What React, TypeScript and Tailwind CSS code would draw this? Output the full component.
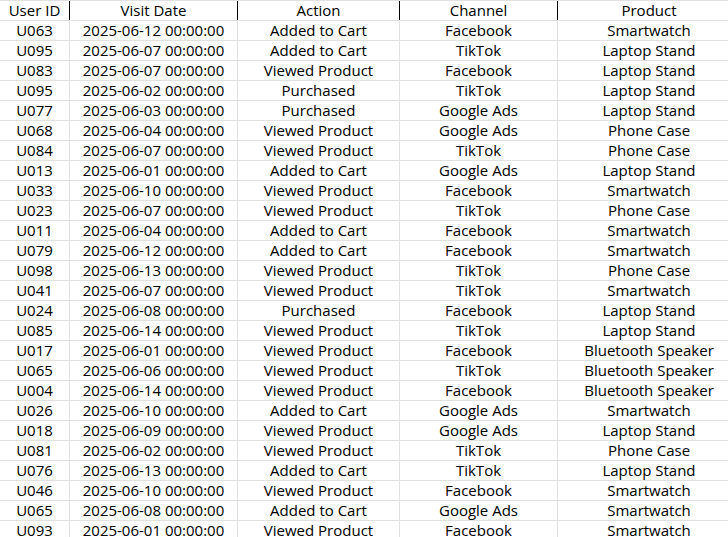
const COLS = [
  { key: "id", label: "User ID", w: "w-[70px]" },
  { key: "date", label: "Visit Date", w: "w-[168px]" },
  { key: "action", label: "Action", w: "w-[162px]" },
  { key: "channel", label: "Channel", w: "w-[158px]" },
  { key: "product", label: "Product", w: "w-[182px]" },
];

const ROWS: string[][] = [
  ["U063", "2025-06-12 00:00:00", "Added to Cart", "Facebook", "Smartwatch"],
  ["U095", "2025-06-07 00:00:00", "Added to Cart", "TikTok", "Laptop Stand"],
  ["U083", "2025-06-07 00:00:00", "Viewed Product", "Facebook", "Laptop Stand"],
  ["U095", "2025-06-02 00:00:00", "Purchased", "TikTok", "Laptop Stand"],
  ["U077", "2025-06-03 00:00:00", "Purchased", "Google Ads", "Laptop Stand"],
  ["U068", "2025-06-04 00:00:00", "Viewed Product", "Google Ads", "Phone Case"],
  ["U084", "2025-06-07 00:00:00", "Viewed Product", "TikTok", "Phone Case"],
  ["U013", "2025-06-01 00:00:00", "Added to Cart", "Google Ads", "Laptop Stand"],
  ["U033", "2025-06-10 00:00:00", "Viewed Product", "Facebook", "Smartwatch"],
  ["U023", "2025-06-07 00:00:00", "Viewed Product", "TikTok", "Phone Case"],
  ["U011", "2025-06-04 00:00:00", "Added to Cart", "Facebook", "Smartwatch"],
  ["U079", "2025-06-12 00:00:00", "Added to Cart", "Facebook", "Smartwatch"],
  ["U098", "2025-06-13 00:00:00", "Viewed Product", "TikTok", "Phone Case"],
  ["U041", "2025-06-07 00:00:00", "Viewed Product", "TikTok", "Smartwatch"],
  ["U024", "2025-06-08 00:00:00", "Purchased", "Facebook", "Laptop Stand"],
  ["U085", "2025-06-14 00:00:00", "Viewed Product", "TikTok", "Laptop Stand"],
  ["U017", "2025-06-01 00:00:00", "Viewed Product", "Facebook", "Bluetooth Speaker"],
  ["U065", "2025-06-06 00:00:00", "Viewed Product", "TikTok", "Bluetooth Speaker"],
  ["U004", "2025-06-14 00:00:00", "Viewed Product", "Facebook", "Bluetooth Speaker"],
  ["U026", "2025-06-10 00:00:00", "Added to Cart", "Google Ads", "Smartwatch"],
  ["U018", "2025-06-09 00:00:00", "Viewed Product", "Google Ads", "Laptop Stand"],
  ["U081", "2025-06-02 00:00:00", "Viewed Product", "TikTok", "Phone Case"],
  ["U076", "2025-06-13 00:00:00", "Added to Cart", "TikTok", "Laptop Stand"],
  ["U046", "2025-06-10 00:00:00", "Viewed Product", "Facebook", "Smartwatch"],
  ["U065", "2025-06-08 00:00:00", "Added to Cart", "Google Ads", "Smartwatch"],
  ["U093", "2025-06-01 00:00:00", "Viewed Product", "Facebook", "Smartwatch"],
];

export default function App() {
  return (
    <div className="w-[728px] h-[537px] overflow-hidden bg-white text-black text-[15px] leading-[19px] font-['Open_Sans','Noto_Sans',sans-serif]">
      <div className="flex h-[20px] border-t border-[#e1e1e1]">
        {COLS.map((c, i) => (
          <div
            key={c.key}
            className={`${c.w} shrink-0 flex items-end justify-center ${i < COLS.length - 1 ? "border-r border-black" : ""}`}
          >
            {c.label}
          </div>
        ))}
      </div>
      {ROWS.map((r, ri) => (
        <div key={ri} className="flex h-[20px] border-t border-[#e1e1e1]">
          {r.map((v, i) => (
            <div
              key={i}
              className={`${COLS[i].w} shrink-0 flex items-end justify-center whitespace-nowrap ${i < COLS.length - 1 ? "border-r border-[#e1e1e1]" : ""}`}
            >
              {v}
            </div>
          ))}
        </div>
      ))}
    </div>
  );
}
